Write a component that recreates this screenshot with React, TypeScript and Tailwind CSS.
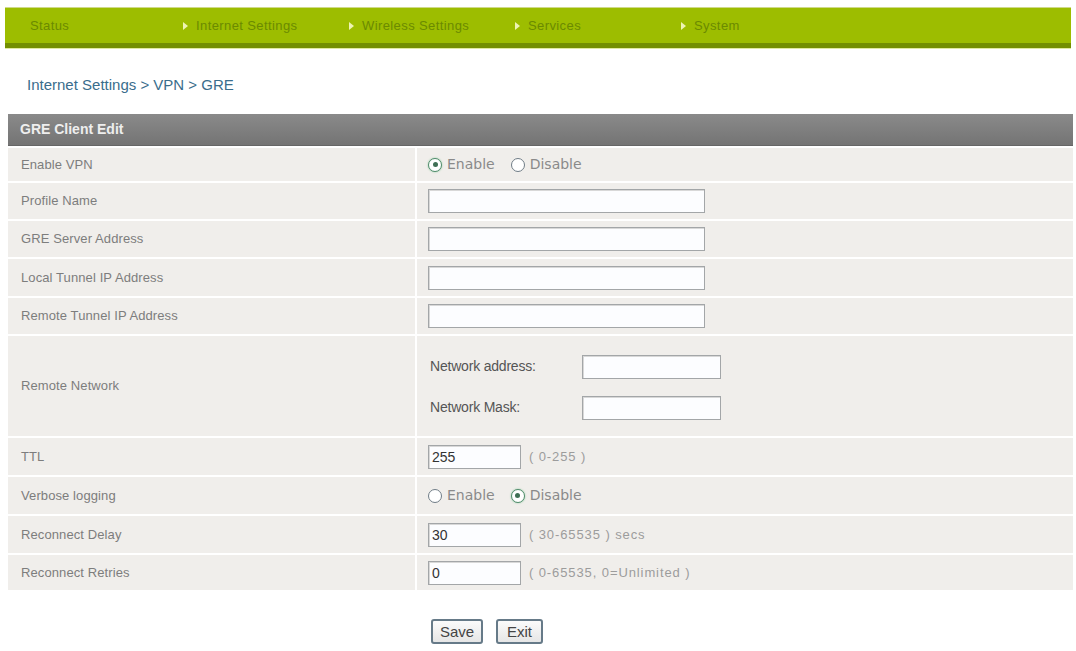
import React from 'react';

const navItems = ['Status', 'Internet Settings', 'Wireless Settings', 'Services', 'System'];

const Radio = ({ checked, label }: { checked: boolean; label: string }) => (
  <label className="flex items-center">
    <span
      className={`flex h-[14px] w-[14px] items-center justify-center rounded-full border-[1.5px] bg-white ${
        checked ? 'border-[#4f8a6a] shadow-[0_0_2px_#8fc7a0]' : 'border-[#6f7c86]'
      }`}
    >
      {checked && <span className="h-[5px] w-[5px] rounded-full bg-[#3f6f55]" />}
    </span>
    <span className="ml-[5px] font-['DejaVu_Sans',sans-serif] text-[14px] text-[#8a8a8a]">{label}</span>
  </label>
);

const TextBox = ({ value = '', w = 'w-[277px]' }: { value?: string; w?: string }) => (
  <input
    readOnly
    value={value}
    className={`${w} h-[24px] border border-[#a3a6a8] bg-[#fcfdff] px-[3px] text-[14px] text-[#333] shadow-[inset_1px_1px_0_#d8d8d8] outline-none`}
  />
);

const Row = ({ label, h, children }: { label: string; h: string; children: React.ReactNode }) => (
  <div className={`flex gap-[2px] ${h}`}>
    <div className="flex w-[407px] items-center bg-[#f0eeeb] pl-[13px] text-[13px] tracking-[0.1px] text-[#7d7d7d]">{label}</div>
    <div className="flex flex-1 items-center bg-[#f0eeeb] pl-[11px]">{children}</div>
  </div>
);

const Hint = ({ children }: { children: React.ReactNode }) => (
  <span className="ml-[8px] text-[13px] tracking-[0.9px] text-[#9c9c9c]">{children}</span>
);

export default function App() {
  return (
    <div className="min-h-screen w-[1076px] bg-white pt-[7px] font-['Liberation_Sans',Arial,sans-serif]">
      {/* top nav */}
      <div className="mx-[5px] flex h-[41px] items-center border-t border-[#cfd98a] border-b-[5px] border-b-[#738f00] bg-[#9dbd00] pl-[12px] shadow-[0_1px_0_#dfe9a0]">
        {navItems.map((item, i) => (
          <div key={item} className="flex w-[166px] items-center">
            <span
              className={`mr-[8px] h-0 w-0 border-y-[4px] border-l-[5px] border-y-transparent ${
                i === 0 ? 'border-l-transparent' : 'border-l-[#eef4b4]'
              }`}
            />
            <span className="text-[13px] tracking-[0.4px] text-[#6b8a00]">{item}</span>
          </div>
        ))}
      </div>

      {/* breadcrumb */}
      <div className="mt-[28px] pl-[27px] text-[15px] leading-[18px] text-[#3a6d8c]">Internet Settings &gt; VPN &gt; GRE</div>

      {/* form table */}
      <div className="ml-[8px] mr-[3px] mt-[20px] flex flex-col gap-[2px]">
        <div className="flex h-[32px] items-center border-b border-[#666] bg-gradient-to-b from-[#8a8a8a] to-[#747474] pl-[12px] text-[14px] font-bold text-[#eeeeee]">
          GRE Client Edit
        </div>
        <Row label="Enable VPN" h="h-[33px]">
          <div className="flex items-center gap-[16px]">
            <Radio checked label="Enable" />
            <Radio checked={false} label="Disable" />
          </div>
        </Row>
        <Row label="Profile Name" h="h-[36px]">
          <TextBox />
        </Row>
        <Row label="GRE Server Address" h="h-[36px]">
          <TextBox />
        </Row>
        <Row label="Local Tunnel IP Address" h="h-[37px]">
          <TextBox />
        </Row>
        <Row label="Remote Tunnel IP Address" h="h-[36px]">
          <TextBox />
        </Row>
        <Row label="Remote Network" h="h-[100px]">
          <div className="flex flex-col gap-[17px] pl-[2px] pt-[2px]">
            <div className="flex items-center">
              <span className="w-[152px] text-[14px] tracking-[-0.2px] text-[#555]">Network address:</span>
              <TextBox w="w-[139px]" />
            </div>
            <div className="flex items-center">
              <span className="w-[152px] text-[14px] tracking-[-0.2px] text-[#555]">Network Mask:</span>
              <TextBox w="w-[139px]" />
            </div>
          </div>
        </Row>
        <Row label="TTL" h="h-[37px]">
          <TextBox value="255" w="w-[93px]" />
          <Hint>( 0-255 )</Hint>
        </Row>
        <Row label="Verbose logging" h="h-[37px]">
          <div className="flex items-center gap-[16px]">
            <Radio checked={false} label="Enable" />
            <Radio checked label="Disable" />
          </div>
        </Row>
        <Row label="Reconnect Delay" h="h-[37px]">
          <TextBox value="30" w="w-[93px]" />
          <Hint>( 30-65535 ) secs</Hint>
        </Row>
        <Row label="Reconnect Retries" h="h-[35px]">
          <TextBox value="0" w="w-[93px]" />
          <Hint>( 0-65535, 0=Unlimited )</Hint>
        </Row>
      </div>

      {/* buttons */}
      <div className="mt-[29px] flex gap-[13px] pl-[431px]">
        <button className="h-[25px] w-[52px] rounded-[3px] border-2 border-[#667a88] bg-gradient-to-b from-[#fbfbfb] to-[#e6e6e6] text-[15px] text-[#444]">
          Save
        </button>
        <button className="h-[25px] w-[47px] rounded-[3px] border-2 border-[#667a88] bg-gradient-to-b from-[#fbfbfb] to-[#e6e6e6] text-[15px] text-[#444]">
          Exit
        </button>
      </div>
    </div>
  );
}
